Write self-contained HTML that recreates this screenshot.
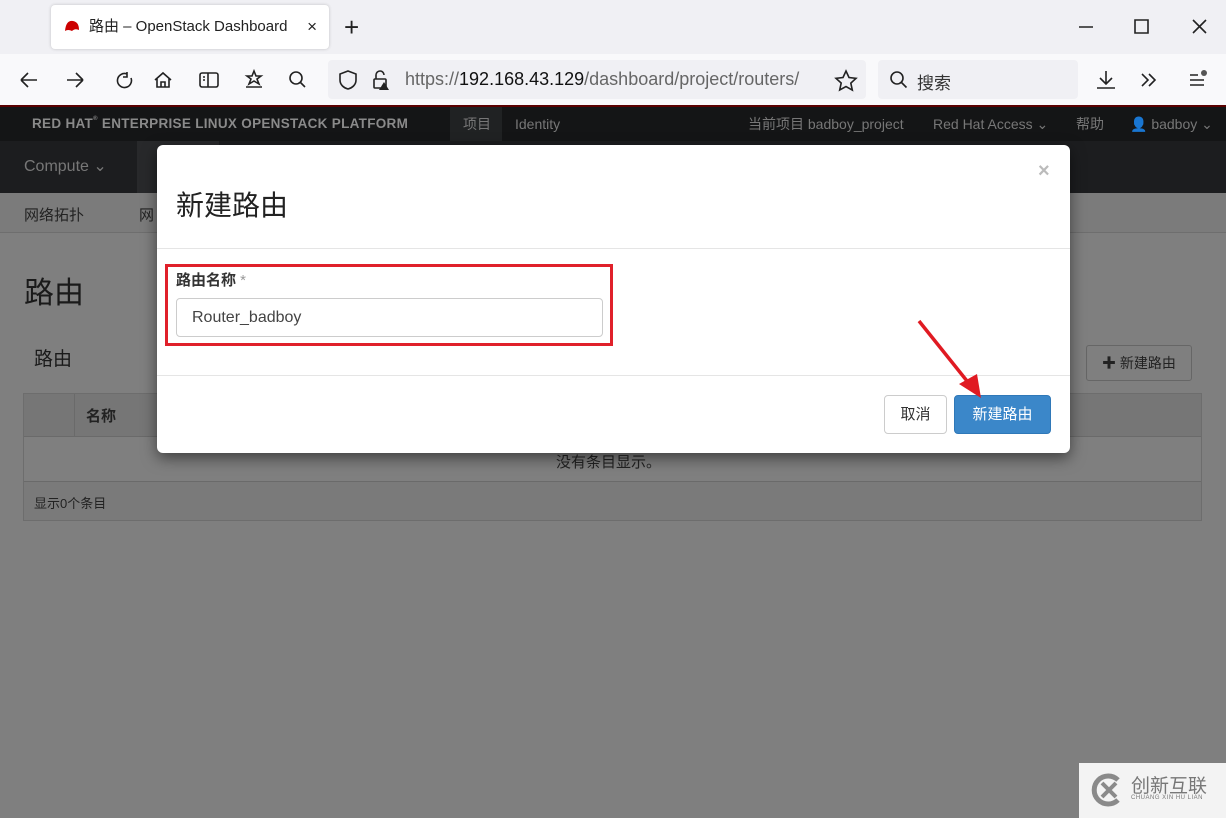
<!DOCTYPE html>
<html><head><meta charset="utf-8"><style>
*{box-sizing:border-box;margin:0;padding:0}
body{width:1226px;height:818px;overflow:hidden;background:#7f7f7f;font-family:"Liberation Sans","Noto Sans CJK SC",sans-serif;position:relative;color:#333}
.abs{position:absolute}
.tabbar{left:0;top:0;width:1226px;height:54px;background:#f0f0f4}
.tab{left:51px;top:5px;width:278px;height:44px;background:#fff;border-radius:4px;box-shadow:0 0 3px rgba(0,0,0,.2);font-size:15px;color:#222;line-height:44px;padding-left:38px}
.toolbar{left:0;top:54px;width:1226px;height:51px;background:#f9f9fb}
.url{left:328px;top:60px;width:538px;height:39px;background:#f0f0f4;border-radius:4px}
.search{left:878px;top:60px;width:200px;height:39px;background:#f0f0f4;border-radius:4px}
.ico{stroke:#222;fill:none;stroke-width:1.6}
.dim{position:absolute;left:0;top:105px;width:1226px;height:713px}
.nv{position:absolute;top:2px;line-height:34px;font-size:14px;color:#777}
</style></head><body>
<div class="abs tabbar"></div>
<div class="abs tab">路由 – OpenStack Dashboard<span style="position:absolute;right:12px;font-size:17px">×</span></div>
<svg class="abs" style="left:63px;top:18px" width="18" height="18"><path d="M2 13 Q3 2 10 3 Q16 4 16 12 Q12 10 9 13 Q5 11 2 13Z" fill="#c00"/></svg>
<div class="abs" style="left:344px;top:12px;font-size:26px;color:#222;font-weight:300">+</div>
<svg class="abs" style="left:1075px;top:15px" width="140" height="24"><path class="ico" stroke-width="1" d="M4 12h14M60 5h13v13H60zM118 5l13 13M131 5l-13 13"/></svg>
<div class="abs toolbar"></div>
<div class="abs url"></div>
<div class="abs search"></div>
<svg class="abs" style="left:15px;top:66px" width="320" height="28">
<path class="ico" d="M6 14h16M6 14l7-7M6 14l7 7"/>
<path class="ico" stroke="#aaa" d="M52 14h16M68 14l-7-7M68 14l-7 7"/>
<path class="ico" d="M112 8a7 7 0 1 0 4 4M112 6v5h-4"/>
<path class="ico" d="M140 14l8-7 8 7M142 12v9h12v-9M146 21v-5h4v5"/>
<rect class="ico" x="185" y="7" width="18" height="14" rx="2"/><path class="ico" d="M193 7v14M188 11h2M188 14h2"/>
<path class="ico" d="M239 5l2 5 5 0-4 3 2 5-5-3-5 3 2-5-4-3 5 0zM231 21h16"/>
<circle class="ico" cx="281" cy="12" r="6"/><path class="ico" d="M285 16l5 5"/>
</svg>
<svg class="abs" style="left:336px;top:66px" width="60" height="28"><path class="ico" d="M12 5l8 3v6c0 5-4 8-8 9-4-1-8-4-8-9V8z"/><rect class="ico" x="38" y="13" width="12" height="9" rx="1"/><path class="ico" d="M40 13v-4a4 4 0 0 1 8 0"/><path d="M48 16l5 8h-10z" fill="#222"/></svg>
<div class="abs" style="left:405px;top:69px;font-size:18px;color:#666">https://<span style="color:#111">192.168.43.129</span>/dashboard/project/routers/</div>
<svg class="abs" style="left:833px;top:68px" width="26" height="24"><path class="ico" d="M13 3l3 6.5 7 .8-5.2 4.8 1.5 7L13 18.5 6.7 22l1.5-7L3 10.3l7-.8z"/></svg>
<svg class="abs" style="left:888px;top:69px" width="22" height="22"><circle class="ico" cx="9" cy="9" r="6"/><path class="ico" d="M13.5 13.5l5 5"/></svg>
<div class="abs" style="left:917px;top:69px;font-size:17px;color:#333">搜索</div>
<svg class="abs" style="left:1093px;top:66px" width="125" height="28"><path class="ico" d="M13 5v13M7 12l6 6 6-6M4 22h18"/><path class="ico" d="M49 8l6 6-6 6M56 8l6 6-6 6"/><path class="ico" d="M97 9h8M97 14h14M97 19h14"/><circle cx="111" cy="7" r="3" fill="#555"/></svg>

<div class="dim">
<div class="abs" style="left:0;top:0;width:1226px;height:2px;background:#5a0000"></div>
<div class="abs" style="left:0;top:2px;width:1226px;height:34px;background:#141516"></div>
<div class="nv" style="left:32px;font-size:13.5px;font-weight:bold;color:#8a8a8a;letter-spacing:.3px">RED HAT<span style="font-size:6px;vertical-align:top;line-height:24px">®</span> ENTERPRISE LINUX OPENSTACK PLATFORM</div>
<div class="abs" style="left:450px;top:2px;width:52px;height:34px;background:#202223"></div>
<div class="nv" style="left:463px">项目</div>
<div class="nv" style="left:515px">Identity</div>
<div class="nv" style="left:748px">当前项目 badboy_project</div>
<div class="nv" style="left:933px">Red Hat Access ⌄</div>
<div class="nv" style="left:1076px">帮助</div>
<div class="nv" style="left:1130px">👤 badboy ⌄</div>
<div class="abs" style="left:0;top:36px;width:1226px;height:52px;background:#1c1d1f"></div>
<div class="abs" style="left:137px;top:36px;width:82px;height:52px;background:#28292b"></div>
<div class="abs" style="left:24px;top:36px;line-height:52px;font-size:16px;color:#777">Compute ⌄</div>
<div class="abs" style="left:0;top:88px;width:1226px;height:40px;background:#7b7b7b;border-bottom:1px solid #6e6e6e"></div>
<div class="abs" style="left:24px;top:99px;font-size:15px;color:#222">网络拓扑</div>
<div class="abs" style="left:139px;top:99px;font-size:15px;color:#222">网</div>
<div class="abs" style="left:24px;top:163px;font-size:30px;color:#1a1a1a">路由</div>
<div class="abs" style="left:34px;top:239px;font-size:19px;color:#1a1a1a">路由</div>
<div class="abs" style="left:1086px;top:240px;width:106px;height:36px;border:1px solid #666;border-radius:3px;font-size:14px;color:#222;line-height:34px;text-align:center"><b>✚</b> 新建路由</div>
<div class="abs" style="left:23px;top:288px;width:1179px;height:128px;border:1px solid #6d6d6d"></div>
<div class="abs" style="left:24px;top:289px;width:1177px;height:43px;background:#767676;border-bottom:1px solid #6a6a6a"></div>
<div class="abs" style="left:74px;top:289px;width:1px;height:43px;background:#6a6a6a"></div>
<div class="abs" style="left:86px;top:300px;font-size:15px;font-weight:bold;color:#222">名称</div>
<div class="abs" style="left:556px;top:346px;font-size:15px;color:#222">没有条目显示。</div>
<div class="abs" style="left:24px;top:376px;width:1177px;height:39px;background:#7a7a7a;border-top:1px solid #6a6a6a"></div>
<div class="abs" style="left:34px;top:388px;font-size:13px;color:#222">显示0个条目</div>
</div>
<div class="abs" style="left:1079px;top:763px;width:147px;height:55px;background:#f3f3f3"></div>
<svg class="abs" style="left:1090px;top:772px" width="36" height="36"><path d="M28 8A14 14 0 1 0 28 28" stroke="#8a8a8a" stroke-width="5" fill="none"/><path d="M12 11l14 14M26 11L12 25" stroke="#8a8a8a" stroke-width="4"/></svg>
<div class="abs" style="left:1131px;top:771px;font-size:19px;color:#777">创新互联</div>
<div class="abs" style="left:1131px;top:795px;font-size:6px;color:#777;letter-spacing:.5px">CHUANG XIN HU LIAN</div>

<div class="abs" style="left:157px;top:145px;width:913px;height:308px;background:#fff;border-radius:6px;box-shadow:0 5px 15px rgba(0,0,0,.5)">
<div class="abs" style="left:881px;top:15px;font-size:20px;color:#bbb;font-weight:bold">×</div>
<div class="abs" style="left:19px;top:39px;font-size:28px;color:#222">新建路由</div>
<div class="abs" style="left:0;top:103px;width:913px;height:1px;background:#e5e5e5"></div>
<div class="abs" style="left:8px;top:119px;width:448px;height:82px;border:3px solid #e0202a"></div>
<div class="abs" style="left:19px;top:124px;font-size:15px;font-weight:bold;color:#333">路由名称 <span style="color:#999;font-weight:normal">*</span></div>
<div class="abs" style="left:19px;top:153px;width:427px;height:39px;border:1px solid #ccc;border-radius:4px;font-size:16px;color:#444;line-height:37px;padding-left:15px">Router_badboy</div>
<div class="abs" style="left:0;top:230px;width:913px;height:1px;background:#e5e5e5"></div>
<div class="abs" style="left:727px;top:250px;width:63px;height:39px;border:1px solid #ccc;border-radius:4px;font-size:15px;color:#333;line-height:37px;text-align:center">取消</div>
<div class="abs" style="left:797px;top:250px;width:97px;height:39px;background:#3b87c9;border:1px solid #2f78b8;border-radius:4px;font-size:15px;color:#fff;line-height:37px;text-align:center">新建路由</div>
</div>
<svg class="abs" style="left:915px;top:318px" width="70" height="82"><path d="M4 3L56 68" stroke="#e01a22" stroke-width="3.5"/><path d="M66 80L44 66 62 56z" fill="#e01a22"/></svg>
</body></html>
